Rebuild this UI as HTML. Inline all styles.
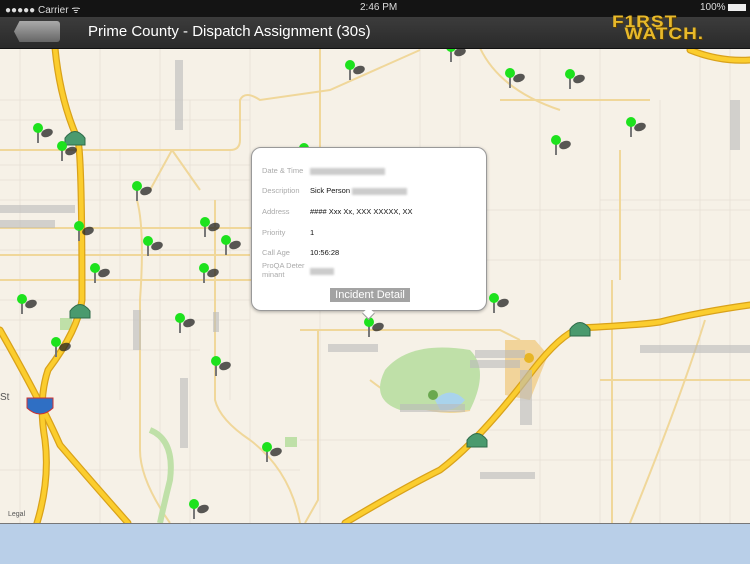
<!DOCTYPE html><html><head><style>
body{margin:0;width:750px;height:563px;overflow:hidden;position:relative;font-family:"Liberation Sans",sans-serif;background:#f6f1e7}
#sb{position:absolute;left:0;top:0;width:750px;height:17px;background:#141414;color:#ddd;font-size:10px}
#nb{position:absolute;left:0;top:17px;width:750px;height:31px;background:linear-gradient(#3c3c3c,#2a2a2a);border-bottom:1px solid #111}
#map{position:absolute;left:0;top:48px}
#pop{position:absolute;left:251px;top:147px;width:234px;height:162px;background:#fff;border:1px solid #999;border-radius:10px;box-shadow:0 1px 3px rgba(0,0,0,.3);font-size:7.5px}
.l{position:absolute;left:10px;color:#aaa}.v{position:absolute;left:58px;color:#111}
.bl{display:inline-block;background:#ccc;height:7px;filter:blur(1px);vertical-align:middle}
#bot{position:absolute;left:0;top:523px;width:750px;height:40px;background:#b9cfe8;border-top:1px solid #777}
</style></head><body>
<svg id="map" width="750" height="475" viewBox="0 48 750 475">
<rect x="0" y="48" width="750" height="475" fill="#f6f1e7"/>
<g stroke="#e6e0d6" stroke-width="0.8" fill="none">
<path d="M0 100H250M0 180H250M0 200H250M0 250H250M0 320H250M300 210H750M300 260H750M480 400H750M480 460H750M300 440H450M0 120H250M0 165H250M0 300H250M0 350H200M0 470H300M480 430H750M600 200H750"/>
<path d="M20 48V523M100 48V523M160 48V523M190 100V523M250 48V523M320 48V523M420 48V150M540 48V523M600 48V523M700 48V523M120 150V400M230 150V400M660 100V523M730 48V523M460 48V150"/>
</g>
<g stroke="#f0d79a" stroke-width="2" fill="none">
<path d="M0 150H230Q240 150 240 140V100Q245 90 260 100L330 90L420 50"/>
<path d="M0 228H250L300 222M0 280H300M0 255H250"/>
<path d="M137 200Q145 230 140 300V450Q140 480 170 523"/>
<path d="M215 200V400Q220 420 250 440Q290 470 300 523"/>
<path d="M320 48V200"/><path d="M172 150L150 190M172 150L200 190"/>
<path d="M300 330H500L520 340"/><path d="M318 330V500L305 523"/>
<path d="M370 380Q420 420 470 410"/>
<path d="M612 280V523"/><path d="M705 320Q680 400 630 523"/>
<path d="M620 150V280M500 100H650M480 48Q500 90 560 110"/>
<path d="M600 380H750"/>
</g>
<path d="M385 370Q410 340 470 350Q490 370 470 410H400Q370 400 385 370Z" fill="#bfe0a8"/>
<path d="M435 400Q450 385 465 400Q455 412 440 410Z" fill="#a9d3ec"/>
<path d="M505 340L535 340L548 355L530 400L505 395Z" fill="#f2d49a"/>
<rect x="60" y="318" width="12" height="12" fill="#bfe0a8"/><rect x="285" y="437" width="12" height="10" fill="#bfe0a8"/>
<path d="M150 430Q175 440 170 480Q165 500 160 523" stroke="#bfe0a8" stroke-width="6" fill="none"/>
<g fill="none" stroke-linecap="round" stroke-linejoin="round">
<g stroke="#d9a21a" stroke-width="7">
<path d="M55 48Q60 100 78 140Q82 160 82 300Q78 330 48 370Q38 400 45 440Q50 480 37 523"/>
<path d="M0 330Q40 400 60 445Q90 480 128 523"/>
<path d="M345 523Q400 490 440 470Q480 440 533 370Q560 335 580 328Q640 325 660 322Q700 312 750 305"/>
<path d="M690 50Q720 62 750 60"/>
</g>
<g stroke="#fbcd2e" stroke-width="4.5">
<path d="M55 48Q60 100 78 140Q82 160 82 300Q78 330 48 370Q38 400 45 440Q50 480 37 523"/>
<path d="M0 330Q40 400 60 445Q90 480 128 523"/>
<path d="M345 523Q400 490 440 470Q480 440 533 370Q560 335 580 328Q640 325 660 322Q700 312 750 305"/>
<path d="M690 50Q720 62 750 60"/>
</g></g>
<g fill="#4a9a6e" stroke="#2f6b4a"><path d="M65 145V138Q75 125 85 138V145Z"/><path d="M70 318V311Q80 298 90 311V318Z"/><path d="M570 336V329Q580 316 590 329V336Z"/><path d="M467 447V440Q477 427 487 440V447Z"/></g>
<path d="M27 398H53V408Q40 420 27 408Z" fill="#2f6fc4" stroke="#c33" stroke-width="1"/>
<circle cx="529" cy="358" r="5" fill="#e7b525"/><circle cx="433" cy="395" r="5" fill="#6aa84f"/>
<g fill="#bbb" opacity=".6"><rect x="0" y="205" width="75" height="8"/><rect x="0" y="220" width="55" height="8"/><rect x="328" y="344" width="50" height="8"/><rect x="475" y="350" width="50" height="8"/><rect x="470" y="360" width="50" height="8"/><rect x="400" y="404" width="65" height="8"/><rect x="480" y="472" width="55" height="7"/><rect x="640" y="345" width="110" height="8"/><rect x="133" y="310" width="8" height="40"/><rect x="180" y="378" width="8" height="70"/><rect x="175" y="60" width="8" height="70"/><rect x="213" y="312" width="6" height="20"/><rect x="520" y="370" width="12" height="55"/><rect x="730" y="100" width="10" height="50"/></g>
<text x="8" y="516" font-size="7" fill="#555" font-family="Liberation Sans">Legal</text>
<text x="0" y="400" font-size="10" fill="#555" font-family="Liberation Sans">St</text>
<g id="pins"></g>
</svg>
<script>
var P=[[350,65],[451,47],[510,73],[570,74],[631,122],[556,140],[38,128],[62,146],[137,186],[79,226],[205,222],[148,241],[226,240],[95,268],[204,268],[22,299],[180,318],[56,342],[216,361],[267,447],[194,504],[369,322],[494,298],[304,148]];
var g=document.getElementById('pins'),s='';
P.forEach(function(p){s+='<g transform="translate('+p[0]+','+p[1]+')"><ellipse cx="9" cy="5" rx="6" ry="4" fill="#222" opacity=".75" transform="rotate(-20 9 5)"/><rect x="-1" y="0" width="2" height="15" fill="#777"/><circle r="5" fill="#1de21d"/></g>'});
g.innerHTML=s;
</script>
<div id="sb"><span style="position:absolute;left:5px;top:2px">●●●●● Carrier ᯤ</span><span style="position:absolute;left:360px;top:2px">2:46 PM</span><span style="position:absolute;left:700px;top:2px">100% <span style="display:inline-block;width:18px;height:7px;background:#eee;vertical-align:-1px"></span></span></div>
<div id="nb"><div style="position:absolute;left:14px;top:4px;width:46px;height:21px;background:linear-gradient(#aaa,#666);clip-path:polygon(12% 0,100% 0,100% 100%,12% 100%,0 50%);border-radius:3px"></div>
<div style="position:absolute;left:88px;top:6px;color:#fff;font-size:15px">Prime County - Dispatch Assignment (30s)</div>
<div style="position:absolute;left:612px;top:0px;color:#e8b92a;font-size:19px;font-weight:900;line-height:14px;letter-spacing:1px;text-shadow:1px 1px 0 #5a3f00;transform:scaleY(0.85);transform-origin:top">F1RST<br>&nbsp;&nbsp;WATCH.</div></div>
<div id="pop">
<div class="l" style="top:18px">Date &amp; Time</div><div class="v" style="top:18px"><span class="bl" style="width:75px"></span></div>
<div class="l" style="top:38px">Description</div><div class="v" style="top:38px">Sick Person <span class="bl" style="width:55px"></span></div>
<div class="l" style="top:59px">Address</div><div class="v" style="top:59px">#### Xxx Xx, XXX XXXXX, XX</div>
<div class="l" style="top:80px">Priority</div><div class="v" style="top:80px">1</div>
<div class="l" style="top:100px">Call Age</div><div class="v" style="top:100px">10:56:28</div>
<div class="l" style="top:113px;line-height:9px">ProQA Deter<br>minant</div><div class="v" style="top:118px"><span class="bl" style="width:24px"></span></div>
<div style="position:absolute;left:78px;top:140px;width:80px;height:14px;background:#a3a3a3;color:#fff;font-size:11px;text-align:center;line-height:14px">Incident Detail</div>
<div style="position:absolute;left:112px;top:161px;width:8px;height:8px;background:#fff;border-right:1px solid #999;border-bottom:1px solid #999;transform:rotate(45deg)"></div>
</div>
<div id="bot"></div>
</body></html>
